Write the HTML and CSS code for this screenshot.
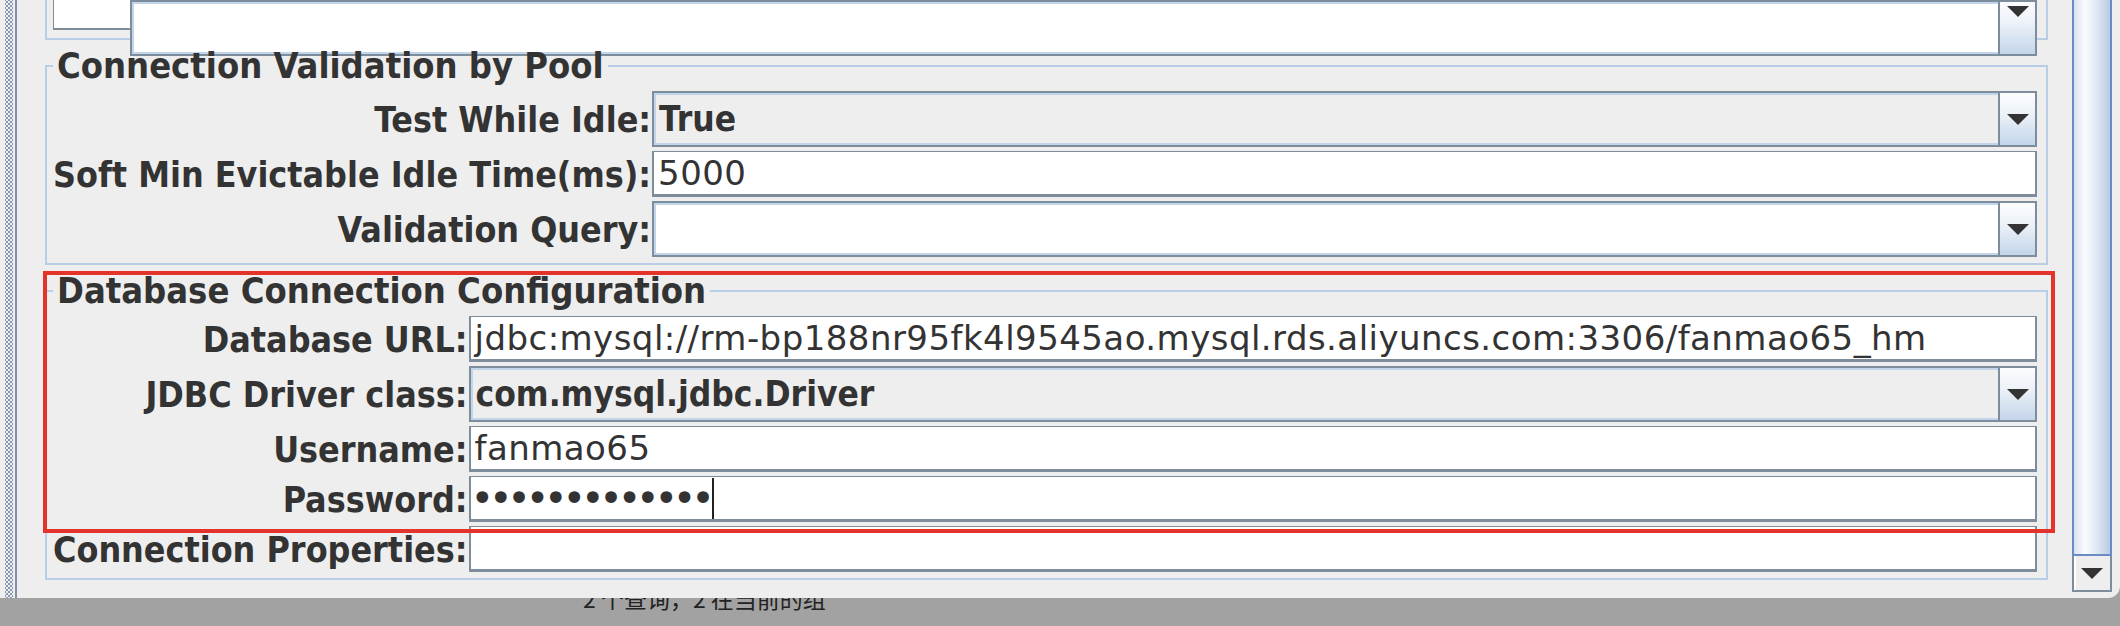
FILE: index.html
```html
<!DOCTYPE html>
<html lang="en">
<head>
  <meta charset="UTF-8" />
  <title>JDBC Connection Configuration</title>
  <link rel="stylesheet" href="styles.css">
</head>
<body>
  <!-- Dialog window -->
  <div class="window">
    <div class="split-handle"></div>

    <div class="pane">
      <!-- previous group, scrolled off the top -->
      <div class="group group-cut">
        <div class="cut-row">
          <div class="cut-cell"></div>
          <div class="combo editable cut-combo">
            <div class="combo-value"></div>
            <div class="combo-btn"><svg class="arrow" viewBox="0 0 22 11"><polygon points="0,0 22,0 11,11"/></svg></div>
          </div>
        </div>
      </div>

      <fieldset class="group">
        <legend>Connection Validation by Pool</legend>
        <div class="form-grid">
          <label>Test While Idle:</label>
          <div class="combo">
            <div class="combo-value">True</div>
            <div class="combo-btn"><svg class="arrow" viewBox="0 0 22 11"><polygon points="0,0 22,0 11,11"/></svg></div>
          </div>
          <label>Soft Min Evictable Idle Time(ms):</label>
          <div class="field">5000</div>
          <label>Validation Query:</label>
          <div class="combo editable">
            <div class="combo-value"></div>
            <div class="combo-btn"><svg class="arrow" viewBox="0 0 22 11"><polygon points="0,0 22,0 11,11"/></svg></div>
          </div>
        </div>
      </fieldset>

      <fieldset class="group">
        <legend>Database Connection Configuration</legend>
        <div class="form-grid">
          <label>Database URL:</label>
          <div class="field">jdbc:mysql://rm-bp188nr95fk4l9545ao.mysql.rds.aliyuncs.com:3306/fanmao65_hm</div>
          <label>JDBC Driver class:</label>
          <div class="combo">
            <div class="combo-value">com.mysql.jdbc.Driver</div>
            <div class="combo-btn"><svg class="arrow" viewBox="0 0 22 11"><polygon points="0,0 22,0 11,11"/></svg></div>
          </div>
          <label>Username:</label>
          <div class="field">fanmao65</div>
          <label>Password:</label>
          <div class="field password"><span class="dots">&bull;&bull;&bull;&bull;&bull;&bull;&bull;&bull;&bull;&bull;&bull;&bull;&bull;</span><span class="caret"></span></div>
          <label>Connection Properties:</label>
          <div class="field"></div>
        </div>
      </fieldset>
    </div>

    <div class="scrollbar">
      <div class="scroll-thumb"></div>
      <div class="scroll-btn"><svg class="arrow" viewBox="0 0 22 11"><polygon points="0,0 22,0 11,11"/></svg></div>
    </div>
    <div class="window-edge"></div>
  </div>

  <!-- status line of the window behind -->
  <div class="status"><span class="status-text">2 个查询，2 在当前的组</span></div>

  <!-- red annotation box -->
  <div class="highlight"></div>
</body>
</html>
```

FILE: styles.css
```css
:root {
  --panel: #eeeeee;
  --group-line: #b8cee6;
  --field-line: #7e8d9c;
  --text: #333333;
  --scroll-line: #6a8bc5;
  --mark: #e4332a;
}

body {
  margin: 0;
  width: 2120px;
  height: 626px;
  overflow: hidden;
  position: relative;
  background: #a2a2a2;
  color: var(--text);
  font-family: "DejaVu Sans", sans-serif;
}

/* Window */
.window {
  display: flex;
  height: 598px;
  background: var(--panel);
  border-bottom-right-radius: 12px;
  overflow: hidden;
}
.split-handle {
  flex: none;
  width: 8px;
  padding: 0 2px 0 5px;
  border-right: 2px solid #8090a6;
  background-image:
    radial-gradient(circle, #8797ad 0.9px, transparent 1.3px),
    radial-gradient(circle, #8797ad 0.9px, transparent 1.3px);
  background-size: 4px 4px;
  background-position: 0 0, 2px 2px;
  background-clip: content-box;
  background-origin: content-box;
}
.pane {
  flex: 1;
  display: flex;
  flex-direction: column;
  gap: 5px;
  padding: 0 24px 0 28px;
  min-width: 0;
}
.scrollbar {
  flex: none;
  width: 40px;
  height: 592px;
  display: flex;
  flex-direction: column;
}
.scroll-thumb {
  flex: 1;
  box-sizing: border-box;
  border: 2px solid var(--scroll-line);
  border-top: none;
  background: linear-gradient(to right, #d6e1ef 0%, #fbfcfe 30%, #e6edf6 55%, #b9cce5 100%);
}
.scroll-btn {
  height: 36px;
  box-sizing: border-box;
  border: 2px solid var(--field-line);
  border-top: none;
  box-shadow: inset 2px 0 0 #fff;
  background: var(--panel);
  display: flex;
  align-items: center;
  justify-content: center;
}
.window-edge {
  flex: none;
  width: 8px;
}

/* Titled groups */
.group {
  margin: 0;
  min-width: 0;
  border: 2px solid var(--group-line);
  padding: 5px 9px 6px 6px;
}
.group legend {
  padding: 0 4px;
  font-family: "DejaVu Sans Condensed", "DejaVu Sans", sans-serif;
  font-stretch: condensed;
  font-weight: bold;
  font-size: 36px;
  line-height: 41px;
  white-space: nowrap;
}
.group-cut {
  border-top: none;
  padding: 0 9px 8px 6px;
}
.cut-row {
  display: flex;
  height: 30px;
}
.cut-cell {
  width: 76px;
  background: #fff;
  border-left: 1px solid var(--field-line);
  border-bottom: 2px solid var(--field-line);
}
.cut-combo {
  flex: 1;
  height: 30px;
  border-top: none;
  border-left: 2px solid #d6d6d6;
}
.cut-combo .combo-btn {
  align-items: flex-start;
  padding-top: 4px;
}

/* Label / control grid */
.form-grid {
  display: grid;
  grid-template-columns: auto 1fr;
  column-gap: 1px;
  row-gap: 4px;
  align-items: center;
}
.form-grid label {
  text-align: right;
  white-space: nowrap;
  font-family: "DejaVu Sans Condensed", "DejaVu Sans", sans-serif;
  font-stretch: condensed;
  font-weight: bold;
  font-size: 35.5px;
  line-height: 41px;
}

/* Text fields */
.field {
  height: 46px;
  box-sizing: border-box;
  background: #fff;
  border: 2px solid var(--field-line);
  border-top-width: 1px;
  border-bottom-width: 3px;
  padding: 1px 4px 0;
  font-size: 34px;
  letter-spacing: 0.45px;
  line-height: 41px;
  white-space: nowrap;
  overflow: hidden;
}
.field.password {
  padding-left: 0;
}
.dots {
  font-size: 40px;
  letter-spacing: -5.2px;
  vertical-align: top;
  line-height: 41px;
}
.caret {
  display: inline-block;
  width: 2px;
  height: 41px;
  margin-left: 2px;
  vertical-align: top;
  background: #222;
}

/* Combo boxes */
.combo {
  height: 56px;
  box-sizing: border-box;
  display: flex;
  background: var(--panel);
  border: 2px solid var(--field-line);
  box-shadow: inset 0 0 0 2px #c3d5ea;
}
.combo.editable {
  background: #fff;
}
.combo-value {
  flex: 1;
  padding-left: 5px;
  align-self: center;
  font-family: "DejaVu Sans Condensed", "DejaVu Sans", sans-serif;
  font-stretch: condensed;
  font-weight: bold;
  font-size: 35px;
  line-height: 41px;
  white-space: nowrap;
}
.combo-btn {
  width: 35px;
  border-left: 2px solid var(--field-line);
  background: linear-gradient(#fbfcfe 0%, #edf2f8 40%, #c3d5ea 100%);
  display: flex;
  align-items: center;
  justify-content: center;
}
.arrow {
  width: 22px;
  height: 11px;
  fill: #333;
}

/* Status line behind the window */
.status {
  height: 28px;
  overflow: hidden;
  padding-left: 583px;
}
.status-text {
  display: block;
  margin-top: -11px;
  font-family: "Noto Sans CJK SC", sans-serif;
  font-size: 23px;
  line-height: 23px;
  color: #222;
}

/* Red annotation */
.highlight {
  position: absolute;
  left: 43px;
  top: 271px;
  width: 2012px;
  height: 262px;
  box-sizing: border-box;
  border: 4px solid var(--mark);
  pointer-events: none;
}
```
